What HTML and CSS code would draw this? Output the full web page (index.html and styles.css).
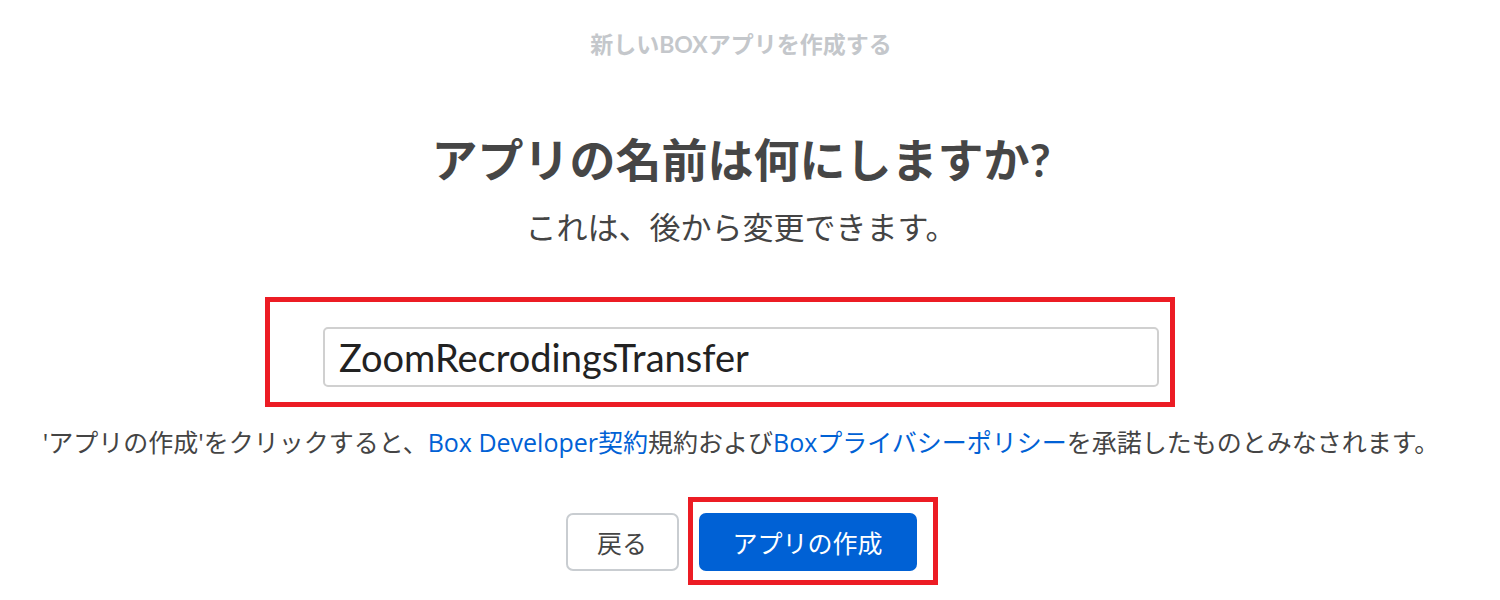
FILE: index.html
```html
<!DOCTYPE html>
<html lang="ja">
<head>
<meta charset="utf-8">
<title>新しいBOXアプリを作成する</title>
<link rel="stylesheet" href="styles.css">
</head>
<body>
<main class="page">
  <div class="eyebrow">新しいBOXアプリを作成する</div>
  <h1 class="title">アプリの名前は何にしますか?</h1>
  <p class="subtitle">これは、後から変更できます。</p>
  <div class="field">
    <input class="name-input" type="text" value="ZoomRecrodingsTransfer">
    <span class="mark mark-field"></span>
  </div>
  <p class="terms">'アプリの作成'をクリックすると、<a href="#">Box Developer契約</a>規約および<a href="#">Boxプライバシーポリシー</a>を承諾したものとみなされます。</p>
  <div class="actions">
    <button class="btn btn-back" type="button">戻る</button>
    <div class="primary-wrap">
      <button class="btn btn-primary" type="button">アプリの作成</button>
      <span class="mark mark-btn"></span>
    </div>
  </div>
</main>
</body>
</html>
```
FILE: styles.css
```css
html, body {
  margin: 0;
  padding: 0;
  background: #ffffff;
}
body {
  min-height: 600px;
  font-family: "Lato", "Noto Sans CJK JP", sans-serif;
  color: #444444;
}
.page {
  width: 1482px;
  padding-bottom: 29px;
  display: flex;
  flex-direction: column;
  align-items: center;
}
.eyebrow {
  margin-top: 29px;
  font-size: 23px;
  line-height: 30px;
  font-weight: 700;
  color: #c4c7cb;
}
.title {
  margin: 74px 0 0;
  font-size: 46px;
  line-height: 54px;
  font-weight: 700;
  color: #464646;
}
.subtitle {
  margin: 20px 0 0;
  font-size: 31px;
  line-height: 40px;
  color: #444444;
}
.field {
  position: relative;
  margin-top: 80px;
}
.name-input {
  display: block;
  box-sizing: border-box;
  width: 836px;
  height: 60px;
  padding: 0 14px;
  border: 2px solid #d0d0d0;
  border-radius: 5px;
  font-family: "Lato", sans-serif;
  font-size: 38px;
  color: #222222;
  background: #ffffff;
  outline: none;
}
.mark {
  position: absolute;
  border: 5px solid #ec1c24;
  pointer-events: none;
}
.mark-field {
  top: -30px;
  left: -58px;
  right: -16px;
  bottom: -20px;
}
.terms {
  margin: 39px 0 0;
  font-family: "Open Sans", "Noto Sans CJK JP", sans-serif;
  font-size: 25px;
  line-height: 32px;
  color: #444444;
  white-space: nowrap;
}
.terms a {
  color: #0061d5;
  text-decoration: none;
}
.actions {
  margin-top: 55px;
  display: flex;
  gap: 20px;
}
.btn {
  box-sizing: border-box;
  height: 58px;
  border-radius: 7px;
  font-family: "Lato", "Noto Sans CJK JP", sans-serif;
  font-size: 25px;
  cursor: pointer;
}
.btn-back {
  width: 113px;
  background: #ffffff;
  border: 2px solid #c9cdd1;
  color: #444444;
}
.primary-wrap {
  position: relative;
}
.btn-primary {
  display: block;
  width: 218px;
  background: #0061d5;
  border: none;
  color: #ffffff;
}
.mark-btn {
  top: -16px;
  left: -11px;
  right: -21px;
  bottom: -14px;
}
```
